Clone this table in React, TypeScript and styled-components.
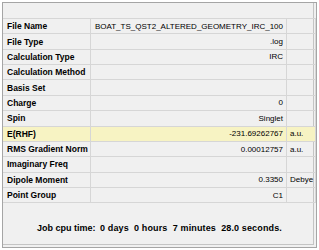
import React from "react";
import styled, { createGlobalStyle } from "styled-components";

const Global = createGlobalStyle`
  html, body { margin: 0; padding: 0; background: #ffffff; }
  body { font-family: "Liberation Sans", Arial, sans-serif; }
`;

const Frame = styled.div`
  box-sizing: border-box;
  margin: 2px;
  width: 315px;
  height: 246px;
  border: 1px solid #a5a5a5;
  background: #f0f0f0;
  display: flex;
  flex-direction: column;
  box-shadow: inset -2px -2px 0 0 #f0f0f0, inset -3px -3px 0 0 #c4c4c4;
`;

const HeaderStrip = styled.div`
  height: 15px;
  flex: none;
`;

const Grid = styled.div`
  display: grid;
  grid-template-columns: 88px 196px 29px;
  grid-auto-rows: 15.37px;
  border-top: 1px solid #d6d6d6;
  flex: none;
`;

const Cell = styled.div<{ $hl?: boolean; $kind: "label" | "value" | "unit" }>`
  box-sizing: border-box;
  display: flex;
  align-items: center;
  border-right: 1px solid #d6d6d6;
  border-bottom: 1px solid #d6d6d6;
  background: ${(p) => (p.$hl ? "#f7f3c3" : "transparent")};
  color: #000;
  white-space: nowrap;
  overflow: hidden;
  font-size: ${(p) => (p.$kind === "label" ? "8.5px" : "8px")};
  font-weight: ${(p) => (p.$kind === "label" ? 700 : 400)};
  justify-content: ${(p) => (p.$kind === "value" ? "flex-end" : "flex-start")};
  padding: ${(p) =>
    p.$kind === "label" ? "0 0 0 4px" : p.$kind === "value" ? "0 3px 0 0" : "0 0 0 3px"};
`;

const Footer = styled.div`
  flex: 1;
  display: flex;
  align-items: center;
  padding: 6px 0 0 34px;
  gap: 4px;
  font-size: 9px;
  font-weight: 700;
  white-space: pre;
`;

const FooterLabel = styled.span`
  width: 59px;
`;

const FooterTime = styled.span`
  letter-spacing: 0.13px;
`;

type Row = { label: string; value: string; unit?: string; hl?: boolean };

const rows: Row[] = [
  { label: "File Name", value: "BOAT_TS_QST2_ALTERED_GEOMETRY_IRC_100" },
  { label: "File Type", value: ".log" },
  { label: "Calculation Type", value: "IRC" },
  { label: "Calculation Method", value: "" },
  { label: "Basis Set", value: "" },
  { label: "Charge", value: "0" },
  { label: "Spin", value: "Singlet" },
  { label: "E(RHF)", value: "-231.69262767", unit: "a.u.", hl: true },
  { label: "RMS Gradient Norm", value: "0.00012757", unit: "a.u." },
  { label: "Imaginary Freq", value: "" },
  { label: "Dipole Moment", value: "0.3350", unit: "Debye" },
  { label: "Point Group", value: "C1" },
];

export default function App() {
  return (
    <>
      <Global />
      <Frame>
        <HeaderStrip />
        <Grid>
          {rows.map((r) => (
            <React.Fragment key={r.label}>
              <Cell $kind="label" $hl={r.hl}>{r.label}</Cell>
              <Cell $kind="value" $hl={r.hl}>{r.value}</Cell>
              <Cell $kind="unit" $hl={r.hl}>{r.unit ?? ""}</Cell>
            </React.Fragment>
          ))}
        </Grid>
        <Footer>
          <FooterLabel>Job cpu time:</FooterLabel>
          <FooterTime>{"0 days  0 hours  7 minutes  28.0 seconds."}</FooterTime>
        </Footer>
      </Frame>
    </>
  );
}
